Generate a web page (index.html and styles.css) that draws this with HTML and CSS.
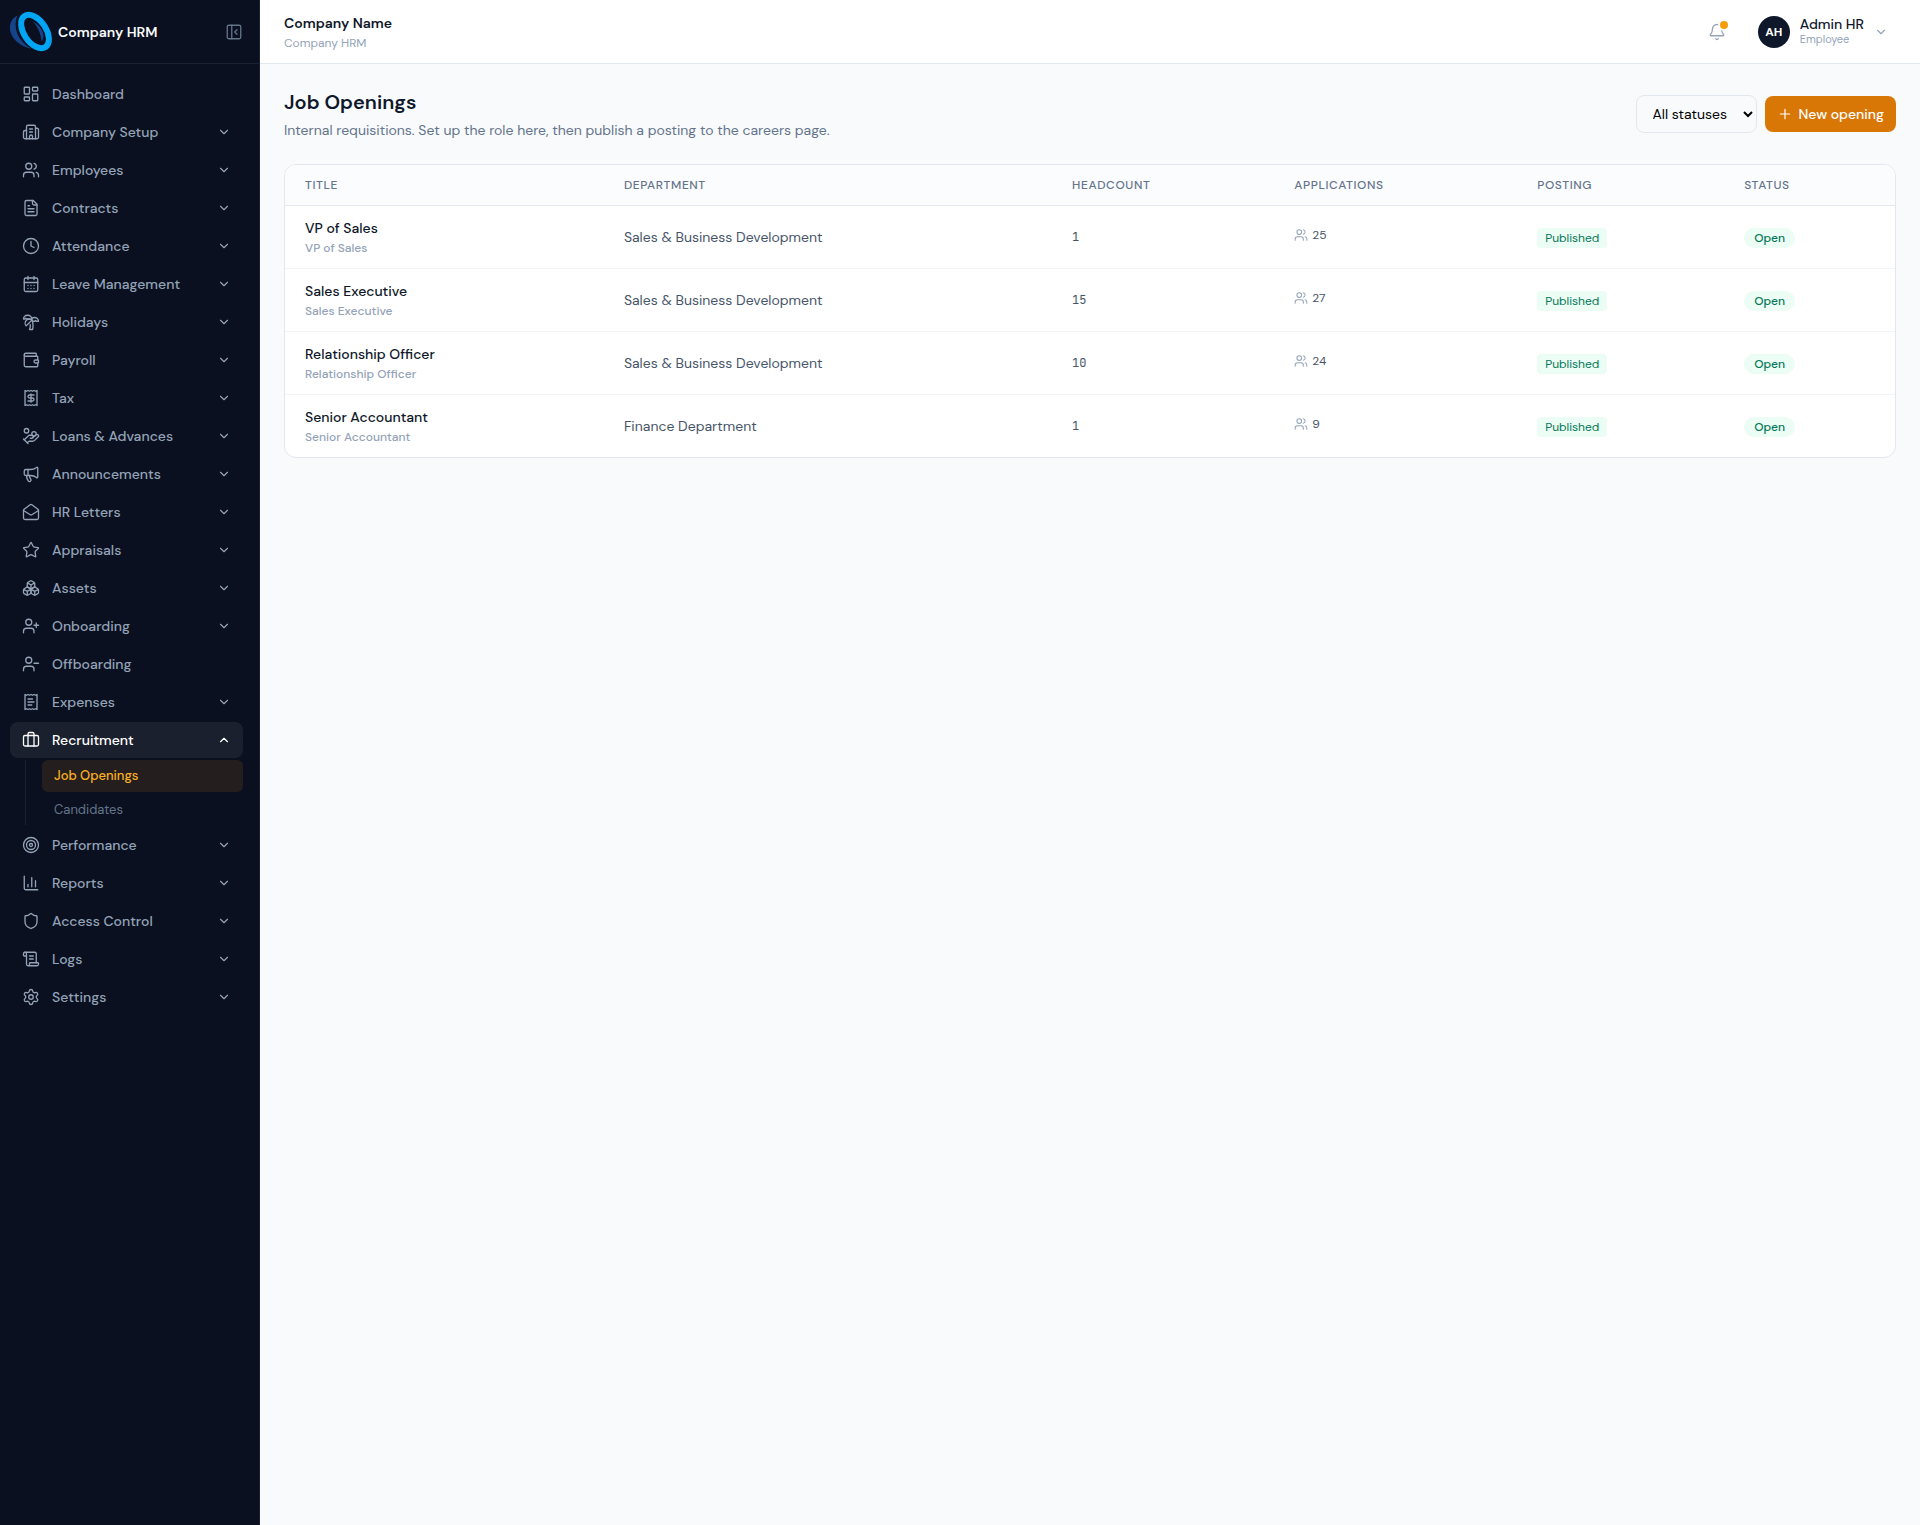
FILE: index.html
```html
<!DOCTYPE html>
<html lang="en">
<head>
    <meta charset="UTF-8">
    <meta name="viewport" content="width=device-width, initial-scale=1">
    <title>Job Openings</title>
    <link rel="stylesheet" href="styles.css">
</head>
<body>

<svg class="sprite" aria-hidden="true">
    <symbol id="i-dashboard" viewBox="0 0 24 24"><rect width="7" height="9" x="3" y="3" rx="1"/><rect width="7" height="5" x="14" y="3" rx="1"/><rect width="7" height="9" x="14" y="12" rx="1"/><rect width="7" height="5" x="3" y="16" rx="1"/></symbol>
    <symbol id="i-building" viewBox="0 0 24 24"><path d="M10 12h4M10 8h4M14 21v-3a2 2 0 0 0-4 0v3"/><path d="M6 10H4a2 2 0 0 0-2 2v7a2 2 0 0 0 2 2h16a2 2 0 0 0 2-2V9a2 2 0 0 0-2-2h-2"/><path d="M6 21V5a2 2 0 0 1 2-2h8a2 2 0 0 1 2 2v16"/></symbol>
    <symbol id="i-file" viewBox="0 0 24 24"><path d="M15 2H6a2 2 0 0 0-2 2v16a2 2 0 0 0 2 2h12a2 2 0 0 0 2-2V7Z"/><path d="M14 2v4a2 2 0 0 0 2 2h4M10 9H8M16 13H8M16 17H8"/></symbol>
    <symbol id="i-clock" viewBox="0 0 24 24"><circle cx="12" cy="12" r="10"/><path d="M12 6v6l4 2"/></symbol>
    <symbol id="i-calendar" viewBox="0 0 24 24"><path d="M8 2v4M16 2v4M3 10h18M8 14h.01M12 14h.01M16 14h.01M8 18h.01M12 18h.01M16 18h.01"/><rect width="18" height="18" x="3" y="4" rx="2"/></symbol>
    <symbol id="i-palm" viewBox="0 0 24 24"><path d="M13 8c0-2.76-2.46-5-5.5-5S2 5.24 2 8h2l1-1 1 1h4"/><path d="M13 7.14A5.82 5.82 0 0 1 16.5 6c3.04 0 5.5 2.24 5.5 5h-3l-1-1-1 1h-3"/><path d="M5.89 9.71c-2.15 2.15-2.3 5.47-.35 7.43l4.24-4.25.7-.7.71-.71 2.12-2.12c-1.95-1.96-5.27-1.8-7.42.35"/><path d="M11 15.5c.5 2.5-.17 4.5-1 6.5h4c2-5.5-.5-12-1-14"/></symbol>
    <symbol id="i-wallet" viewBox="0 0 24 24"><path d="M19 7V4a1 1 0 0 0-1-1H5a2 2 0 0 0 0 4h15a1 1 0 0 1 1 1v4h-3a2 2 0 0 0 0 4h3a1 1 0 0 0 1-1v-2a1 1 0 0 0-1-1"/><path d="M3 5v14a2 2 0 0 0 2 2h15a1 1 0 0 0 1-1v-4"/></symbol>
    <symbol id="i-tax" viewBox="0 0 24 24"><path d="M4 2v20l2-1 2 1 2-1 2 1 2-1 2 1 2-1 2 1V2l-2 1-2-1-2 1-2-1-2 1-2-1-2 1Z"/><path d="M16 8h-6a2 2 0 1 0 0 4h4a2 2 0 1 1 0 4H8M12 17.5v-11"/></symbol>
    <symbol id="i-coins" viewBox="0 0 24 24"><path d="M11 15h2a2 2 0 1 0 0-4h-3c-.6 0-1.1.2-1.4.6L3 17"/><path d="m7 21 1.6-1.4c.3-.4.8-.6 1.4-.6h4c1.1 0 2.1-.4 2.8-1.2l4.6-4.4a2 2 0 0 0-2.75-2.91l-4.2 3.9M2 16l6 6"/><circle cx="16" cy="9" r="2.9"/><circle cx="6" cy="5" r="3"/></symbol>
    <symbol id="i-megaphone" viewBox="0 0 24 24"><path d="M11 6a13 13 0 0 0 8.4-2.8A1 1 0 0 1 21 4v12a1 1 0 0 1-1.6.8A13 13 0 0 0 11 14H5a2 2 0 0 1-2-2V8a2 2 0 0 1 2-2z"/><path d="M6 14a12 12 0 0 0 2.4 7.2 2 2 0 0 0 3.2-2.4A8 8 0 0 1 10 14M8 6v8"/></symbol>
    <symbol id="i-mail" viewBox="0 0 24 24"><path d="M21.2 8.4c.5.38.8.97.8 1.6v10a2 2 0 0 1-2 2H4a2 2 0 0 1-2-2V10a2 2 0 0 1 .8-1.6l8-6a2 2 0 0 1 2.4 0l8 6Z"/><path d="m22 10-8.97 5.7a1.94 1.94 0 0 1-2.06 0L2 10"/></symbol>
    <symbol id="i-star" viewBox="0 0 24 24"><path d="M11.525 2.295a.53.53 0 0 1 .95 0l2.31 4.679a2.123 2.123 0 0 0 1.595 1.16l5.166.756a.53.53 0 0 1 .294.904l-3.736 3.638a2.123 2.123 0 0 0-.611 1.878l.882 5.14a.53.53 0 0 1-.771.56l-4.618-2.428a2.122 2.122 0 0 0-1.973 0L6.396 21.01a.53.53 0 0 1-.77-.56l.881-5.139a2.122 2.122 0 0 0-.611-1.879L2.16 9.795a.53.53 0 0 1 .294-.906l5.165-.755a2.122 2.122 0 0 0 1.597-1.16z"/></symbol>
    <symbol id="i-boxes" viewBox="0 0 24 24"><path d="M2.97 12.92A2 2 0 0 0 2 14.63v3.24a2 2 0 0 0 .97 1.71l3 1.8a2 2 0 0 0 2.06 0L12 19v-5.5l-5-3-4.03 2.42ZM7 16.5l-4.74-2.85M7 16.5l5-3M7 16.5v5.17"/><path d="M12 13.5V19l3.97 2.38a2 2 0 0 0 2.06 0l3-1.8a2 2 0 0 0 .97-1.71v-3.24a2 2 0 0 0-.97-1.71L17 10.5l-5 3ZM17 16.5l-5-3M17 16.5l4.74-2.85M17 16.5v5.17"/><path d="M7.97 4.42A2 2 0 0 0 7 6.13v4.37l5 3 5-3V6.13a2 2 0 0 0-.97-1.71l-3-1.8a2 2 0 0 0-2.06 0l-3 1.8ZM12 8 7.26 5.15M12 8l4.74-2.85M12 13.5V8"/></symbol>
    <symbol id="i-user-plus" viewBox="0 0 24 24"><path d="M16 21v-2a4 4 0 0 0-4-4H6a4 4 0 0 0-4 4v2"/><circle cx="9" cy="7" r="4"/><path d="M19 8v6M22 11h-6"/></symbol>
    <symbol id="i-user-minus" viewBox="0 0 24 24"><path d="M16 21v-2a4 4 0 0 0-4-4H6a4 4 0 0 0-4 4v2"/><circle cx="9" cy="7" r="4"/><path d="M22 11h-6"/></symbol>
    <symbol id="i-people" viewBox="0 0 24 24"><path d="M16 21v-2a4 4 0 0 0-4-4H6a4 4 0 0 0-4 4v2"/><circle cx="9" cy="7" r="4"/><path d="M22 21v-2a4 4 0 0 0-3-3.87M16 3.13a4 4 0 0 1 0 7.75"/></symbol>
    <symbol id="i-receipt" viewBox="0 0 24 24"><path d="M4 2v20l2-1 2 1 2-1 2 1 2-1 2 1 2-1 2 1V2l-2 1-2-1-2 1-2-1-2 1-2-1-2 1Z"/><path d="M14 8H8M16 12H8M13 16H8"/></symbol>
    <symbol id="i-briefcase" viewBox="0 0 24 24"><path d="M16 20V4a2 2 0 0 0-2-2h-4a2 2 0 0 0-2 2v16"/><rect width="20" height="14" x="2" y="6" rx="2"/></symbol>
    <symbol id="i-target" viewBox="0 0 24 24"><circle cx="12" cy="12" r="10"/><circle cx="12" cy="12" r="6"/><circle cx="12" cy="12" r="2"/></symbol>
    <symbol id="i-chart" viewBox="0 0 24 24"><path d="M3 3v16a2 2 0 0 0 2 2h16M18 17V9M13 17V5M8 17v-3"/></symbol>
    <symbol id="i-shield" viewBox="0 0 24 24"><path d="M20 13c0 5-3.5 7.5-7.66 8.95a1 1 0 0 1-.67-.01C7.5 20.5 4 18 4 13V6a1 1 0 0 1 1-1c2 0 4.5-1.2 6.24-2.72a1.17 1.17 0 0 1 1.52 0C14.51 3.81 17 5 19 5a1 1 0 0 1 1 1z"/></symbol>
    <symbol id="i-scroll" viewBox="0 0 24 24"><path d="M15 12h-5M15 8h-5M19 17V5a2 2 0 0 0-2-2H4"/><path d="M8 21h12a2 2 0 0 0 2-2v-1a1 1 0 0 0-1-1H11a1 1 0 0 0-1 1v1a2 2 0 1 1-4 0V5a2 2 0 1 0-4 0v2a1 1 0 0 0 1 1h3"/></symbol>
    <symbol id="i-settings" viewBox="0 0 24 24"><path d="M9.671 4.136a2.34 2.34 0 0 1 4.659 0 2.34 2.34 0 0 0 3.319 1.915 2.34 2.34 0 0 1 2.33 4.033 2.34 2.34 0 0 0 0 3.831 2.34 2.34 0 0 1-2.33 4.033 2.34 2.34 0 0 0-3.319 1.915 2.34 2.34 0 0 1-4.659 0 2.34 2.34 0 0 0-3.32-1.915 2.34 2.34 0 0 1-2.33-4.033 2.34 2.34 0 0 0 0-3.831A2.34 2.34 0 0 1 6.35 6.051a2.34 2.34 0 0 0 3.319-1.915"/><circle cx="12" cy="12" r="3"/></symbol>
    <symbol id="i-panel" viewBox="0 0 24 24"><rect width="18" height="18" x="3" y="3" rx="2"/><path d="M9 3v18M16 15l-3-3 3-3"/></symbol>
    <symbol id="i-bell" viewBox="0 0 24 24"><path d="M10.268 21a2 2 0 0 0 3.464 0"/><path d="M3.262 15.326A1 1 0 0 0 4 17h16a1 1 0 0 0 .74-1.673C19.41 13.956 18 12.499 18 8A6 6 0 0 0 6 8c0 4.499-1.411 5.956-2.738 7.326"/></symbol>
    <symbol id="i-plus" viewBox="0 0 24 24"><path d="M5 12h14M12 5v14"/></symbol>
    <symbol id="i-down" viewBox="0 0 24 24"><path d="m6 9 6 6 6-6"/></symbol>
    <symbol id="i-up" viewBox="0 0 24 24"><path d="m18 15-6-6-6 6"/></symbol>
</svg>

<div class="layout">
    <aside class="sidebar">
        <div class="brand">
            <svg class="logo" viewBox="0 0 44 44" aria-hidden="true">
                <path class="logo-dark" d="M7.5 5.5C-6 12 -2 33 21.5 39C9 32 2 18 7.500 5.500Z"/>
                <path class="logo-dark" d="M22.5 11C33 17 36 27 31.500 31.500C31 24 28 17 22.500 11Z"/>
                <ellipse class="logo-ring" cx="25" cy="21.500" rx="11" ry="18.700" transform="rotate(-34 25 21.500)"/>
            </svg>
            <span class="brand-name">Company HRM</span>
            <button class="collapse" type="button" aria-label="Collapse sidebar"><svg class="icon"><use href="#i-panel"/></svg></button>
        </div>

        <nav class="menu" id="menu">
            <a class="menu-item" href="#"><svg class="icon"><use href="#i-dashboard"/></svg><span>Dashboard</span></a>
            <button class="menu-item" type="button"><svg class="icon"><use href="#i-building"/></svg><span>Company Setup</span><svg class="chevron"><use href="#i-down"/></svg></button>
            <button class="menu-item" type="button"><svg class="icon"><use href="#i-people"/></svg><span>Employees</span><svg class="chevron"><use href="#i-down"/></svg></button>
            <button class="menu-item" type="button"><svg class="icon"><use href="#i-file"/></svg><span>Contracts</span><svg class="chevron"><use href="#i-down"/></svg></button>
            <button class="menu-item" type="button"><svg class="icon"><use href="#i-clock"/></svg><span>Attendance</span><svg class="chevron"><use href="#i-down"/></svg></button>
            <button class="menu-item" type="button"><svg class="icon"><use href="#i-calendar"/></svg><span>Leave Management</span><svg class="chevron"><use href="#i-down"/></svg></button>
            <button class="menu-item" type="button"><svg class="icon"><use href="#i-palm"/></svg><span>Holidays</span><svg class="chevron"><use href="#i-down"/></svg></button>
            <button class="menu-item" type="button"><svg class="icon"><use href="#i-wallet"/></svg><span>Payroll</span><svg class="chevron"><use href="#i-down"/></svg></button>
            <button class="menu-item" type="button"><svg class="icon"><use href="#i-tax"/></svg><span>Tax</span><svg class="chevron"><use href="#i-down"/></svg></button>
            <button class="menu-item" type="button"><svg class="icon"><use href="#i-coins"/></svg><span>Loans &amp; Advances</span><svg class="chevron"><use href="#i-down"/></svg></button>
            <button class="menu-item" type="button"><svg class="icon"><use href="#i-megaphone"/></svg><span>Announcements</span><svg class="chevron"><use href="#i-down"/></svg></button>
            <button class="menu-item" type="button"><svg class="icon"><use href="#i-mail"/></svg><span>HR Letters</span><svg class="chevron"><use href="#i-down"/></svg></button>
            <button class="menu-item" type="button"><svg class="icon"><use href="#i-star"/></svg><span>Appraisals</span><svg class="chevron"><use href="#i-down"/></svg></button>
            <button class="menu-item" type="button"><svg class="icon"><use href="#i-boxes"/></svg><span>Assets</span><svg class="chevron"><use href="#i-down"/></svg></button>
            <button class="menu-item" type="button"><svg class="icon"><use href="#i-user-plus"/></svg><span>Onboarding</span><svg class="chevron"><use href="#i-down"/></svg></button>
            <a class="menu-item" href="#"><svg class="icon"><use href="#i-user-minus"/></svg><span>Offboarding</span></a>
            <button class="menu-item" type="button"><svg class="icon"><use href="#i-receipt"/></svg><span>Expenses</span><svg class="chevron"><use href="#i-down"/></svg></button>
            <button class="menu-item active" type="button" aria-expanded="true"><svg class="icon"><use href="#i-briefcase"/></svg><span>Recruitment</span><svg class="chevron"><use href="#i-up"/></svg></button>
            <div class="submenu">
                <a class="submenu-item current" href="#">Job Openings</a>
                <a class="submenu-item" href="#">Candidates</a>
            </div>
            <button class="menu-item" type="button"><svg class="icon"><use href="#i-target"/></svg><span>Performance</span><svg class="chevron"><use href="#i-down"/></svg></button>
            <button class="menu-item" type="button"><svg class="icon"><use href="#i-chart"/></svg><span>Reports</span><svg class="chevron"><use href="#i-down"/></svg></button>
            <button class="menu-item" type="button"><svg class="icon"><use href="#i-shield"/></svg><span>Access Control</span><svg class="chevron"><use href="#i-down"/></svg></button>
            <button class="menu-item" type="button"><svg class="icon"><use href="#i-scroll"/></svg><span>Logs</span><svg class="chevron"><use href="#i-down"/></svg></button>
            <button class="menu-item" type="button"><svg class="icon"><use href="#i-settings"/></svg><span>Settings</span><svg class="chevron"><use href="#i-down"/></svg></button>
        </nav>
    </aside>

    <div class="page">
        <header class="topbar">
            <div class="company">
                <div class="company-name">Company Name</div>
                <div class="company-sub">Company HRM</div>
            </div>
            <button class="bell" type="button" aria-label="Notifications"><svg class="icon"><use href="#i-bell"/></svg><span class="bell-dot"></span></button>
            <button class="profile" type="button">
                <span class="avatar">AH</span>
                <span class="profile-text">
                    <span class="profile-name">Admin HR</span>
                    <span class="profile-role">Employee</span>
                </span>
                <svg class="chevron"><use href="#i-down"/></svg>
            </button>
        </header>

        <main class="content">
            <div class="page-head">
                <div>
                    <h1>Job Openings</h1>
                    <p>Internal requisitions. Set up the role here, then publish a posting to the careers page.</p>
                </div>
                <div class="actions">
                    <select class="status-filter" id="statusFilter" aria-label="Status">
                        <option>All statuses</option>
                        <option>Open</option>
                        <option>Closed</option>
                    </select>
                    <button class="btn-primary" type="button"><svg class="icon"><use href="#i-plus"/></svg>New opening</button>
                </div>
            </div>

            <div class="card">
                <table class="openings">
                    <thead>
                        <tr><th>Title</th><th>Department</th><th>Headcount</th><th>Applications</th><th>Posting</th><th>Status</th></tr>
                    </thead>
                    <tbody>
                        <tr>
                            <td><div class="job-title">VP of Sales</div><div class="job-role">VP of Sales</div></td>
                            <td>Sales &amp; Business Development</td>
                            <td class="headcount">1</td>
                            <td><a class="applicants" href="#"><svg class="icon"><use href="#i-people"/></svg>25</a></td>
                            <td><span class="tag">Published</span></td>
                            <td><span class="pill">Open</span></td>
                        </tr>
                        <tr>
                            <td><div class="job-title">Sales Executive</div><div class="job-role">Sales Executive</div></td>
                            <td>Sales &amp; Business Development</td>
                            <td class="headcount">15</td>
                            <td><a class="applicants" href="#"><svg class="icon"><use href="#i-people"/></svg>27</a></td>
                            <td><span class="tag">Published</span></td>
                            <td><span class="pill">Open</span></td>
                        </tr>
                        <tr>
                            <td><div class="job-title">Relationship Officer</div><div class="job-role">Relationship Officer</div></td>
                            <td>Sales &amp; Business Development</td>
                            <td class="headcount">10</td>
                            <td><a class="applicants" href="#"><svg class="icon"><use href="#i-people"/></svg>24</a></td>
                            <td><span class="tag">Published</span></td>
                            <td><span class="pill">Open</span></td>
                        </tr>
                        <tr>
                            <td><div class="job-title">Senior Accountant</div><div class="job-role">Senior Accountant</div></td>
                            <td>Finance Department</td>
                            <td class="headcount">1</td>
                            <td><a class="applicants" href="#"><svg class="icon"><use href="#i-people"/></svg>9</a></td>
                            <td><span class="tag">Published</span></td>
                            <td><span class="pill">Open</span></td>
                        </tr>
                    </tbody>
                </table>
            </div>
        </main>
    </div>
</div>

</body>
</html>
```
FILE: styles.css
```css
* {
    box-sizing: border-box;
}

body {
    margin: 0;
    font-family: "DM Sans", Inter, sans-serif;
    font-size: 14px;
    line-height: 20px;
    color: #0f172a;
    background: #f8fafc;
}

button,
select {
    font: inherit;
    cursor: pointer;
}

a {
    color: inherit;
    text-decoration: none;
}

.sprite {
    display: none;
}

.icon,
.chevron {
    flex: none;
    width: 18px;
    height: 18px;
    fill: none;
    stroke: currentColor;
    stroke-width: 1.75;
    stroke-linecap: round;
    stroke-linejoin: round;
}

.chevron {
    width: 14px;
    height: 14px;
    stroke-width: 2;
}

.layout {
    display: flex;
    min-height: 100vh;
}

/* Sidebar */
.sidebar {
    flex: none;
    width: 260px;
    background: #0a101f;
    border-right: 1px solid #1a2130;
}

.brand {
    display: flex;
    align-items: center;
    height: 64px;
    padding: 0 16px 0 10px;
    border-bottom: 1px solid #1a2130;
}

.logo {
    width: 44px;
    height: 44px;
}

.logo-dark {
    fill: #15448a;
}

.logo-ring {
    fill: none;
    stroke: #00a6f4;
    stroke-width: 6;
}

.brand-name {
    flex: 1;
    margin-left: 4px;
    font-weight: 600;
    color: #f8fafc;
}

.collapse {
    display: flex;
    padding: 0;
    border: 0;
    background: none;
    color: #64748b;
}

.menu {
    display: flex;
    flex-direction: column;
    gap: 2px;
    padding: 12px 16px 12px 10px;
}

.menu-item {
    display: flex;
    align-items: center;
    gap: 12px;
    height: 36px;
    padding: 0 12px;
    border: 0;
    border-radius: 8px;
    background: none;
    color: #94a3b8;
    font-weight: 500;
    text-align: left;
}

.menu-item span {
    flex: 1;
}

.menu-item.active {
    background: #1a202d;
    color: #ffffff;
}

.submenu {
    display: flex;
    flex-direction: column;
    gap: 2px;
    margin-left: 15px;
    padding-left: 16px;
    border-left: 1px solid #1a2130;
}

.submenu-item {
    padding: 6px 12px;
    border-radius: 6px;
    font-size: 13px;
    line-height: 1.5;
    color: #64748b;
}

.submenu-item.current {
    background: #241f1e;
    color: #fbb01e;
    font-weight: 500;
}

/* Top bar */
.page {
    flex: 1;
    min-width: 0;
}

.topbar {
    display: flex;
    align-items: center;
    gap: 24px;
    height: 64px;
    padding: 0 32px 0 24px;
    background: #ffffff;
    border-bottom: 1px solid #e2e8f0;
}

.company {
    flex: 1;
}

.company-name {
    font-weight: 600;
}

.company-sub {
    margin-top: 2px;
    font-size: 12px;
    line-height: 16px;
    color: #94a3b8;
}

.bell {
    position: relative;
    display: flex;
    padding: 8px;
    border: 0;
    background: none;
    color: #94a3b8;
}

.bell-dot {
    position: absolute;
    top: 6px;
    right: 6px;
    width: 8px;
    height: 8px;
    border-radius: 50%;
    background: #f59e0b;
    box-shadow: 0 0 0 2px #ffffff;
}

.profile {
    display: flex;
    align-items: center;
    gap: 10px;
    padding: 0;
    border: 0;
    background: none;
    color: #94a3b8;
    text-align: left;
}

.avatar {
    width: 32px;
    height: 32px;
    border-radius: 50%;
    background: #0f172a;
    color: #ffffff;
    font-size: 12px;
    font-weight: 700;
    line-height: 32px;
    text-align: center;
}

.profile-name,
.profile-role {
    display: block;
    line-height: 15px;
}

.profile-name {
    color: #0f172a;
    font-weight: 500;
}

.profile-role {
    font-size: 11px;
}

/* Page content */
.content {
    padding: 24px;
}

.page-head {
    display: flex;
    align-items: center;
    justify-content: space-between;
    margin-bottom: 24px;
}

.page-head h1 {
    margin: 0;
    font-size: 20px;
    font-weight: 600;
    line-height: 28px;
}

.page-head p {
    margin: 4px 0 0;
    color: #64748b;
}

.actions {
    display: flex;
    align-items: center;
    gap: 8px;
}

.status-filter {
    height: 38px;
    padding: 0 12px;
    border: 1px solid #e2e8f0;
    border-radius: 8px;
    background: #f8fafc;
    color: #000000;
}

.btn-primary {
    display: flex;
    align-items: center;
    gap: 6px;
    height: 36px;
    padding: 0 12px;
    border: 0;
    border-radius: 8px;
    background: #d97706;
    color: #ffffff;
    font-weight: 500;
}

.btn-primary .icon {
    width: 16px;
    height: 16px;
}

/* Openings table */
.card {
    overflow: hidden;
    border: 1px solid #e2e8f0;
    border-radius: 12px;
    background: #ffffff;
}

.openings {
    width: 100%;
    border-collapse: collapse;
}

.openings th {
    padding: 12px 20px;
    border-bottom: 1px solid #e2e8f0;
    background: #fbfcfe;
    color: #64748b;
    font-size: 12px;
    font-weight: 500;
    line-height: 16px;
    letter-spacing: 0.05em;
    text-align: left;
    text-transform: uppercase;
}

.openings td {
    padding: 12px 20px;
    color: #475569;
}

.openings tr + tr td {
    border-top: 1px solid #f1f5f9;
}

.openings .job-title {
    color: #0f172a;
    font-weight: 500;
}

.openings .job-role {
    margin-top: 2px;
    color: #94a3b8;
    font-size: 12px;
    font-weight: 500;
    line-height: 16px;
}

.openings .headcount {
    font-family: "JetBrains Mono", "Liberation Mono", monospace;
    font-size: 12px;
}

.applicants {
    display: inline-flex;
    align-items: center;
    gap: 4px;
    font-size: 12px;
    line-height: 16px;
}

.applicants .icon {
    width: 14px;
    height: 14px;
    color: #94a3b8;
}

.tag,
.pill {
    background: #ecfdf5;
    color: #047857;
    font-size: 12px;
}

.tag {
    padding: 2px 8px;
    border-radius: 4px;
}

.pill {
    display: inline-flex;
    padding: 2px 10px;
    border-radius: 10px;
    font-weight: 500;
    line-height: 16px;
}
```
